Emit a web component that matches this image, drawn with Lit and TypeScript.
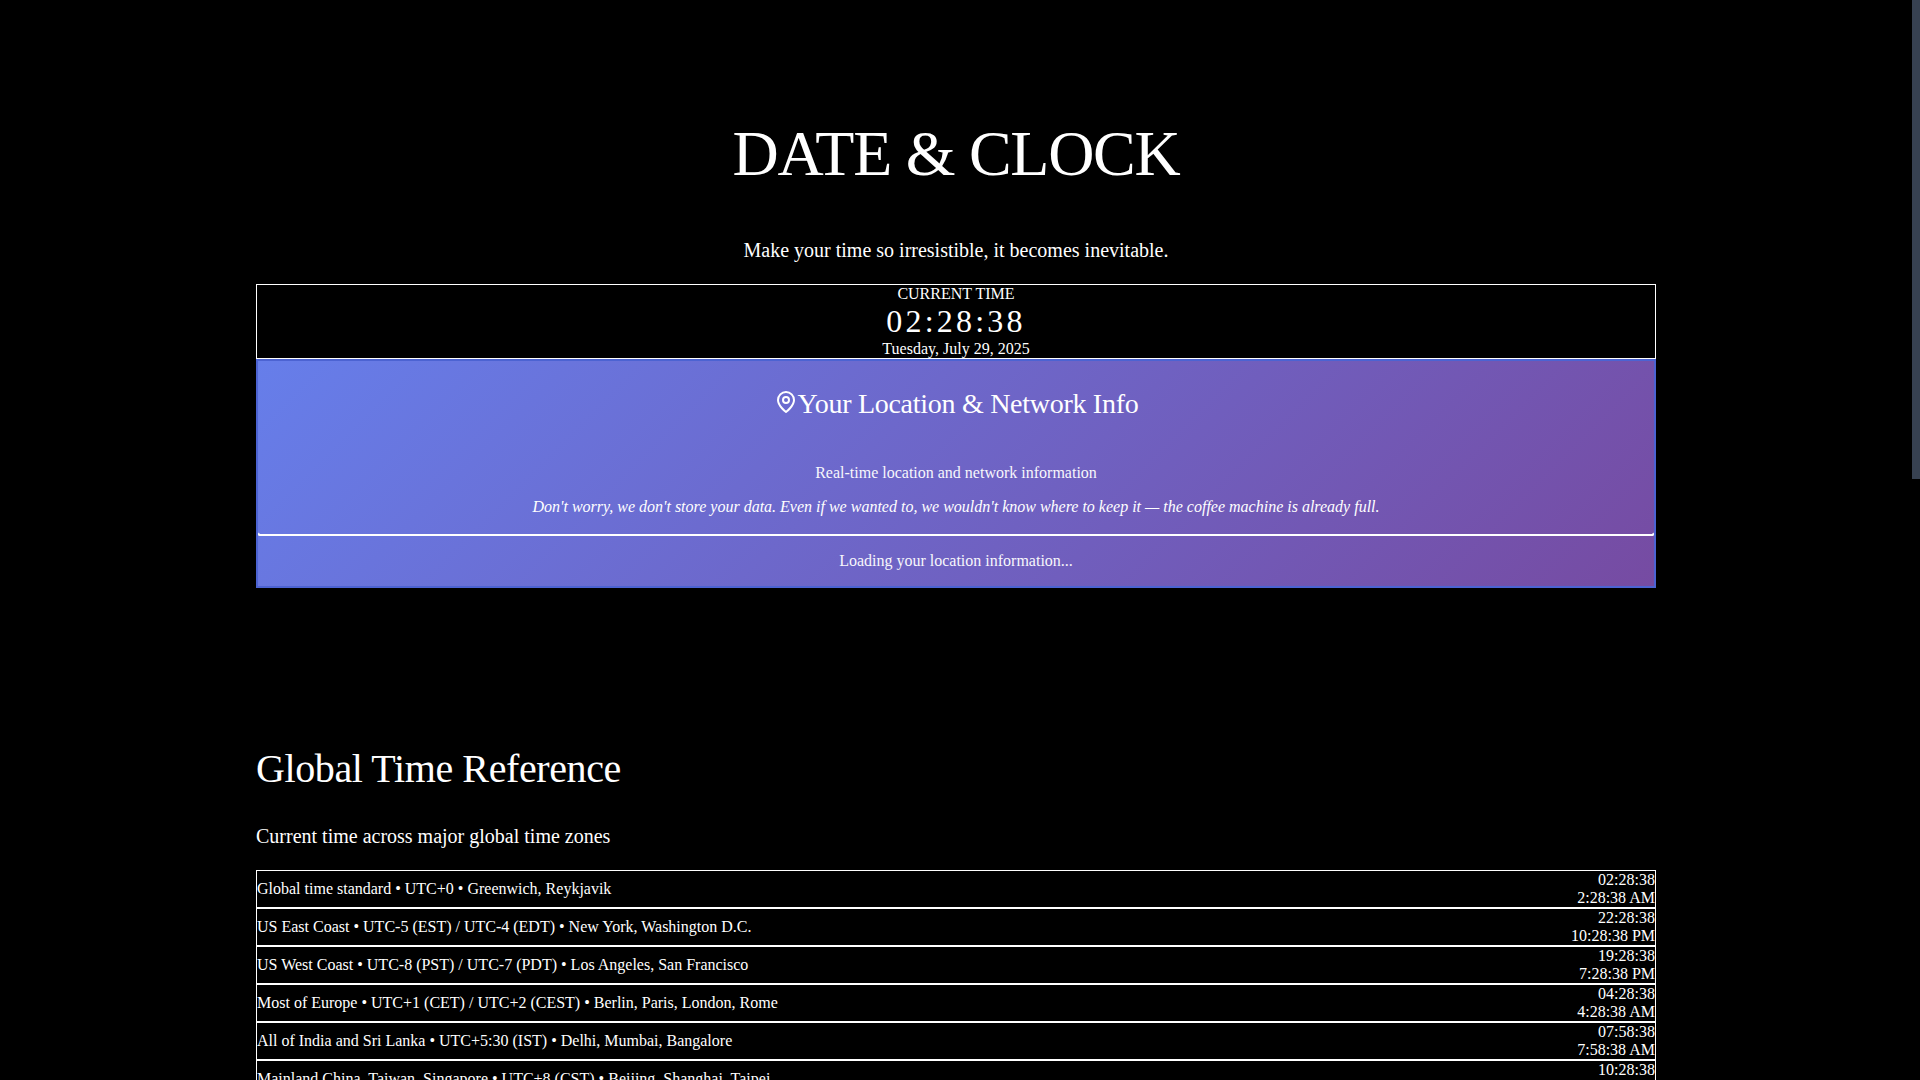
import { LitElement, html, css } from "lit";
import { customElement } from "lit/decorators.js";

interface Zone {
  label: string;
  time24: string;
  time12: string;
}

const ZONES: Zone[] = [
  { label: "Global time standard • UTC+0 • Greenwich, Reykjavik", time24: "02:28:38", time12: "2:28:38 AM" },
  { label: "US East Coast • UTC-5 (EST) / UTC-4 (EDT) • New York, Washington D.C.", time24: "22:28:38", time12: "10:28:38 PM" },
  { label: "US West Coast • UTC-8 (PST) / UTC-7 (PDT) • Los Angeles, San Francisco", time24: "19:28:38", time12: "7:28:38 PM" },
  { label: "Most of Europe • UTC+1 (CET) / UTC+2 (CEST) • Berlin, Paris, London, Rome", time24: "04:28:38", time12: "4:28:38 AM" },
  { label: "All of India and Sri Lanka • UTC+5:30 (IST) • Delhi, Mumbai, Bangalore", time24: "07:58:38", time12: "7:58:38 AM" },
  { label: "Mainland China, Taiwan, Singapore • UTC+8 (CST) • Beijing, Shanghai, Taipei", time24: "10:28:38", time12: "10:28:38 AM" },
];

@customElement("app-root")
export class AppRoot extends LitElement {
  static styles = css`
    :host {
      display: flex;
      height: 100vh;
      overflow: hidden;
      background: #000;
      color: #fff;
      font-family: "Liberation Serif", "Times New Roman", serif;
      font-size: 16px;
      line-height: 18px;
    }
    .page {
      flex: 1;
      min-width: 0;
      overflow: hidden;
    }
    .container {
      max-width: 1400px;
      margin: 0 auto;
    }
    .scrolltrack {
      flex: none;
      width: 8px;
      background: #000;
    }
    .scrollthumb {
      height: 44.35%;
      background: #374151;
    }
    h1,
    h2,
    h3,
    p {
      margin: 0;
      font-weight: 400;
    }
    .hero {
      padding-top: 117px;
      text-align: center;
    }
    .title {
      font-size: 64px;
      line-height: 74px;
      letter-spacing: -0.02em;
    }
    .lead {
      font-size: 20px;
      line-height: 24px;
      padding: 20px 0 22px;
    }
    .hero .lead {
      margin-top: 27px;
    }
    .clock {
      border: 1px solid #fff;
    }
    .time {
      font-size: 32px;
      line-height: 37px;
      letter-spacing: 0.1em;
    }
    .location {
      border: 2px solid #4c63d2;
      background: linear-gradient(135deg, #667eea 0%, #764ba2 100%);
    }
    .heading {
      display: flex;
      align-items: center;
      justify-content: center;
      padding: 27px 0 28px;
      font-size: 28px;
      line-height: 32px;
      letter-spacing: -0.01em;
    }
    .pin {
      width: 24px;
      height: 24px;
      margin-bottom: 4px;
    }
    .location p {
      margin: 16px 0;
      opacity: 0.95;
    }
    .location .note {
      font-style: italic;
      opacity: 1;
    }
    .spinner {
      border: 2px solid #fff;
      border-top-color: transparent;
      border-radius: 2px;
    }
    .reference {
      padding-top: 158px;
    }
    .section-title {
      font-size: 40px;
      line-height: 46px;
      letter-spacing: -0.01em;
    }
    .reference .lead {
      margin-top: 12px;
    }
    .zones {
      list-style: none;
      margin: 0;
      padding: 0;
    }
    .zone {
      display: flex;
      align-items: center;
      justify-content: space-between;
      border: 1px solid #fff;
    }
    .times {
      display: flex;
      flex-direction: column;
      text-align: right;
    }
  `;

  render() {
    return html`
      <main class="page">
        <div class="container">
          <header class="hero">
            <h1 class="title">DATE &amp; CLOCK</h1>
            <p class="lead">Make your time so irresistible, it becomes inevitable.</p>
            <section class="clock">
              <div>CURRENT TIME</div>
              <div class="time">02:28:38</div>
              <div>Tuesday, July 29, 2025</div>
            </section>
            <section class="location">
              <h3 class="heading">
                <svg class="pin" viewBox="0 0 24 24" fill="none" stroke="currentColor" stroke-width="2" stroke-linecap="round" stroke-linejoin="round" aria-hidden="true">
                  <path d="M12 22C12 22 20 16 20 10a8 8 0 1 0-16 0C4 16 12 22 12 22Z" />
                  <circle cx="12" cy="10" r="3" />
                </svg>
                Your Location &amp; Network Info
              </h3>
              <p>Real-time location and network information</p>
              <p class="note">
                Don't worry, we don't store your data. Even if we wanted to, we wouldn't know where to keep it — the coffee machine is already full.
              </p>
              <div class="spinner"></div>
              <p>Loading your location information...</p>
            </section>
          </header>
          <section class="reference">
            <h2 class="section-title">Global Time Reference</h2>
            <p class="lead">Current time across major global time zones</p>
            <ul class="zones">
              ${ZONES.map(
                (z) => html`<li class="zone">
                  <span>${z.label}</span>
                  <span class="times"><span>${z.time24}</span><span>${z.time12}</span></span>
                </li>`
              )}
            </ul>
          </section>
        </div>
      </main>
      <div class="scrolltrack"><div class="scrollthumb"></div></div>
    `;
  }
}
